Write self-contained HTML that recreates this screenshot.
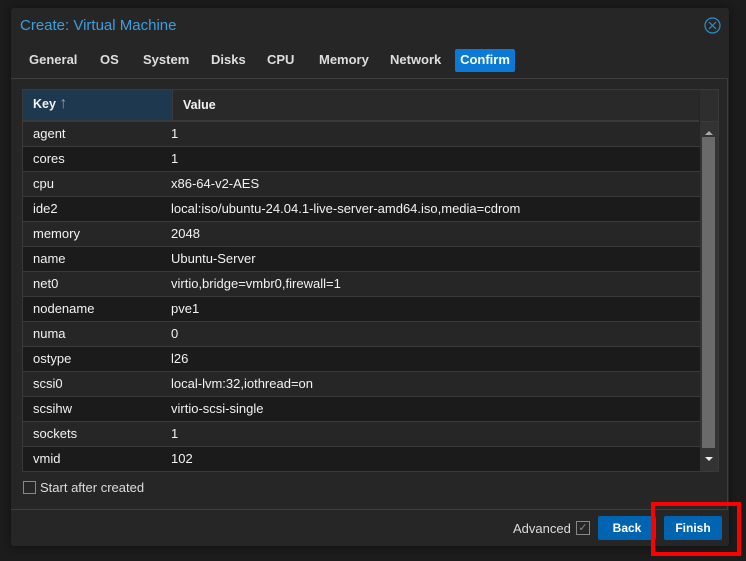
<!DOCTYPE html>
<html><head><style>
body{margin:0;width:746px;height:561px;background:#1c1c1c;font-family:"Liberation Sans",Arial,sans-serif;position:relative;overflow:hidden;color:#f2f2f2}
.dlg{position:absolute;left:11px;top:8px;width:718px;height:538px;background:#262626;border-radius:3px;box-shadow:0 0 8px #111}
.title{position:absolute;left:9px;top:9px;font-size:15px;color:#3c9fe0}
.close{position:absolute;left:693px;top:9px}
.tab{position:absolute;top:44px;font-size:13px;font-weight:bold;color:#dedede}
.conf{position:absolute;left:444px;top:41px;width:60px;height:23px;background:#0a7ad6;border-radius:2px;color:#fff;font-size:13px;font-weight:bold;text-align:center;line-height:22px}
.body{position:absolute;left:0;top:70px;width:716px;height:430px;border:1px solid #3e3e3e;border-left:none}
.grid{position:absolute;left:11px;top:81px;width:695px;height:381px;border:1px solid #3a3a3a}
.hdr{position:absolute;left:0;top:0;width:676px;height:30px;background:#292929;border-bottom:2px solid #3a3a3a;font-size:12.5px;font-weight:bold}
.hk{position:absolute;left:0;top:0;width:149px;height:30px;background:#1e384f;border-right:1px solid #3a3a3a}
.row{position:absolute;left:0;width:677px;height:24px;border-bottom:1px solid #3a3a3a;font-size:13px;line-height:24px}
.row span{position:absolute;left:10px}.row b{position:absolute;left:148px;font-weight:normal}
.sb{position:absolute;left:677px;top:0;width:18px;height:381px;background:#333}
.btn{position:absolute;top:508px;height:24px;background:#0064b1;border-radius:2px;color:#fff;font-size:12px;font-weight:bold;text-align:center;line-height:24px}
</style></head><body>
<div class="dlg">
<div class="title">Create: Virtual Machine</div>
<svg class="close" width="17" height="17" viewBox="0 0 17 17"><circle cx="8.5" cy="8.5" r="7.5" fill="none" stroke="#2a8fd0" stroke-width="1.2"/><path d="M5 5L12 12M12 5L5 12" stroke="#2a8fd0" stroke-width="1.2"/></svg>
<div class="tab" style="left:18px">General</div><div class="tab" style="left:89px">OS</div><div class="tab" style="left:132px">System</div><div class="tab" style="left:200px">Disks</div><div class="tab" style="left:256px">CPU</div><div class="tab" style="left:308px">Memory</div><div class="tab" style="left:379px">Network</div>
<div class="conf">Confirm</div>
<div class="body"></div>
<div class="grid">
<div class="hdr"><div class="hk"></div><span style="position:absolute;left:10px;top:7px">Key <span style="color:#999;font-weight:normal;font-size:16px;line-height:14px">↑</span></span><span style="position:absolute;left:160px;top:8px">Value</span></div>
<div class="sb"><div style="position:absolute;left:0;top:0;width:18px;height:31px;background:#2e2e2e;border-bottom:1px solid #3a3a3a"></div><div style="position:absolute;left:5px;top:41px;border:4px solid transparent;border-bottom:4px solid #aaa;border-top:none"></div><div style="position:absolute;left:2px;top:47px;width:13px;height:311px;background:#6a6a6a"></div><div style="position:absolute;left:5px;top:367px;border:4px solid transparent;border-top:4px solid #eee;border-bottom:none"></div></div>
<div class="row" style="top:32px;background:#262626"><span>agent</span><b>1</b></div>
<div class="row" style="top:57px;background:#1b1b1b"><span>cores</span><b>1</b></div>
<div class="row" style="top:82px;background:#262626"><span>cpu</span><b>x86-64-v2-AES</b></div>
<div class="row" style="top:107px;background:#1b1b1b"><span>ide2</span><b>local:iso/ubuntu-24.04.1-live-server-amd64.iso,media=cdrom</b></div>
<div class="row" style="top:132px;background:#262626"><span>memory</span><b>2048</b></div>
<div class="row" style="top:157px;background:#1b1b1b"><span>name</span><b>Ubuntu-Server</b></div>
<div class="row" style="top:182px;background:#262626"><span>net0</span><b>virtio,bridge=vmbr0,firewall=1</b></div>
<div class="row" style="top:207px;background:#1b1b1b"><span>nodename</span><b>pve1</b></div>
<div class="row" style="top:232px;background:#262626"><span>numa</span><b>0</b></div>
<div class="row" style="top:257px;background:#1b1b1b"><span>ostype</span><b>l26</b></div>
<div class="row" style="top:282px;background:#262626"><span>scsi0</span><b>local-lvm:32,iothread=on</b></div>
<div class="row" style="top:307px;background:#1b1b1b"><span>scsihw</span><b>virtio-scsi-single</b></div>
<div class="row" style="top:332px;background:#262626"><span>sockets</span><b>1</b></div>
<div class="row" style="top:357px;background:#1b1b1b"><span>vmid</span><b>102</b></div>
</div>
<div style="position:absolute;left:12px;top:473px;width:11px;height:11px;border:1px solid #888"></div>
<div style="position:absolute;left:29px;top:472px;font-size:13px;color:#ddd">Start after created</div>
<div style="position:absolute;left:502px;top:513px;font-size:13px;color:#ddd">Advanced</div>
<div style="position:absolute;left:565px;top:513px;width:12px;height:12px;border:1px solid #888;color:#888;font-size:11px;line-height:12px;text-align:center">✓</div>
<div class="btn" style="left:587px;width:58px">Back</div>
<div class="btn" style="left:653px;width:58px">Finish</div>
</div>
<div style="position:absolute;left:651px;top:502px;width:82px;height:46px;border:4px solid #f00"></div>
</body></html>
